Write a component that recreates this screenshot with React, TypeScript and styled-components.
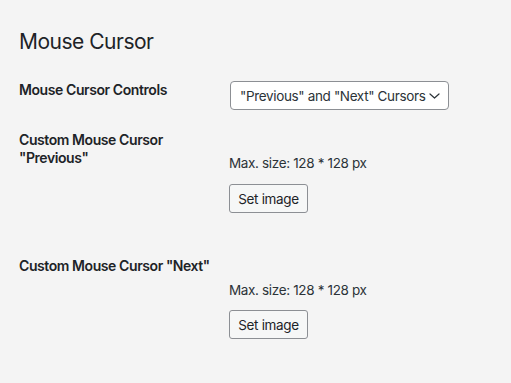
import React from "react";
import styled, { createGlobalStyle } from "styled-components";

const Global = createGlobalStyle`
  html, body { margin: 0; padding: 0; background: #f4f4f4; }
  body { font-family: Inter, "Noto Sans", sans-serif; color: #1d2327; -webkit-font-smoothing: antialiased; }
`;

const Page = styled.div`
  padding: 27px 19px 0 19px;
  width: 511px;
  height: 383px;
  box-sizing: border-box;
  background: #f4f4f4;
  overflow: hidden;
`;

const Heading = styled.h2`
  margin: 0;
  font-size: 21px;
  line-height: 30px;
  font-weight: 400;
  letter-spacing: -0.5px;
  color: #1d2327;
`;

const Row = styled.div<{ $gap: number }>`
  display: grid;
  grid-template-columns: 200px 1fr;
  column-gap: 10px;
  margin-top: ${(p) => p.$gap}px;
`;

const Label = styled.div`
  font-size: 14px;
  line-height: 18px;
  font-weight: 600;
  letter-spacing: -0.42px;
  color: #1d2327;
`;

const Field = styled.div<{ $pad: number }>`
  display: flex;
  flex-direction: column;
  align-items: flex-start;
  padding-top: ${(p) => p.$pad}px;
`;

const SelectBox = styled.div`
  display: flex;
  align-items: center;
  justify-content: space-between;
  height: 29px;
  box-sizing: border-box;
  padding: 0 8px 0 9px;
  width: 219px;
  margin-left: 1px;
  border: 1px solid #8c8f94;
  border-radius: 4px;
  background: #fff;
  font-size: 13.5px;
  letter-spacing: -0.35px;
  color: #2c3338;
  white-space: nowrap;
`;

const Description = styled.div`
  font-size: 13.5px;
  line-height: 18px;
  letter-spacing: -0.35px;
  color: #2c3338;
`;

const Button = styled.button<{ $mt: number }>`
  margin-top: ${(p) => p.$mt}px;
  height: 29px;
  width: 79px;
  padding: 0;
  box-sizing: border-box;
  border: 1px solid #8c8f94;
  border-radius: 3px;
  background: #f6f7f7;
  font-family: Inter, "Noto Sans", sans-serif;
  font-size: 13.5px;
  letter-spacing: -0.35px;
  color: #1d2327;
`;

const Chevron = () => (
  <svg width="11" height="6" viewBox="0 0 11 6" fill="none">
    <polyline points="1,1 5.5,5 10,1" stroke="#2c3338" strokeWidth="1.2" strokeLinecap="round" strokeLinejoin="round" />
  </svg>
);

export default function App() {
  return (
    <Page>
      <Global />
      <Heading>Mouse Cursor</Heading>
      <Row $gap={24}>
        <Label>Mouse Cursor Controls</Label>
        <Field $pad={0}>
          <SelectBox>
            <span>"Previous" and "Next" Cursors</span>
            <Chevron />
          </SelectBox>
        </Field>
      </Row>
      <Row $gap={21}>
        <Label>Custom Mouse Cursor "Previous"</Label>
        <Field $pad={23}>
          <Description>Max. size: 128 * 128 px</Description>
          <Button $mt={12}>Set image</Button>
        </Field>
      </Row>
      <Row $gap={44}>
        <Label>Custom Mouse Cursor "Next"</Label>
        <Field $pad={24}>
          <Description>Max. size: 128 * 128 px</Description>
          <Button $mt={11}>Set image</Button>
        </Field>
      </Row>
    </Page>
  );
}
